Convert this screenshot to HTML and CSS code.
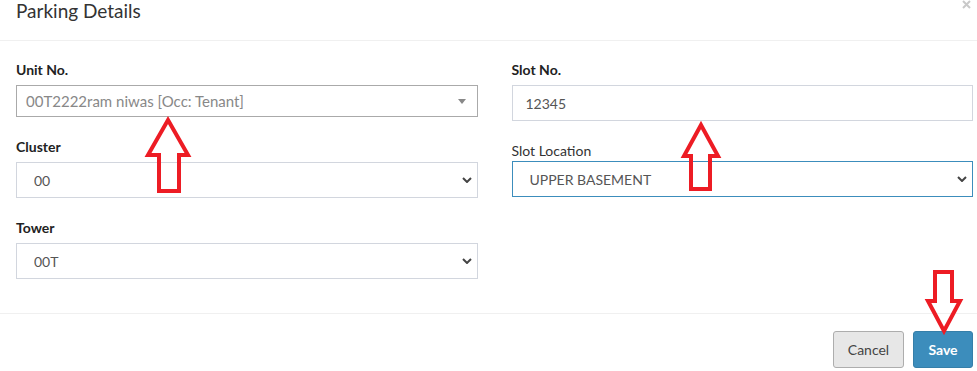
FILE: index.html
```html
<!DOCTYPE html>
<html lang="en">
<head>
  <meta charset="UTF-8" />
  <title>Parking Details</title>
  <link rel="stylesheet" href="styles.css">
</head>
<body>
  <div class="modal">
    <div class="modal-header">
      <h4 class="modal-title">Parking Details</h4>
      <span class="close" aria-label="Close">
        <svg width="9" height="9" viewBox="0 0 9 9"><path d="M1 1 L8 8 M8 1 L1 8" stroke="#c9c9c9" stroke-width="2"/></svg>
      </span>
    </div>

    <div class="modal-body">
      <div class="col">
        <div class="form-group">
          <label class="lbl">Unit No.</label>
          <div class="select2">
            <span class="select2-text">00T2222ram niwas [Occ: Tenant]</span>
            <span class="select2-arrow"></span>
          </div>
        </div>
        <div class="form-group">
          <label class="lbl">Cluster</label>
          <div class="select-wrap">
            <select class="form-control"><option>00</option></select>
            <svg class="chevron" width="10" height="6" viewBox="0 0 10 6"><path d="M1 1 L5 5 L9 1" fill="none" stroke="#444" stroke-width="2"/></svg>
          </div>
        </div>
        <div class="form-group">
          <label class="lbl">Tower</label>
          <div class="select-wrap">
            <select class="form-control"><option>00T</option></select>
            <svg class="chevron" width="10" height="6" viewBox="0 0 10 6"><path d="M1 1 L5 5 L9 1" fill="none" stroke="#444" stroke-width="2"/></svg>
          </div>
        </div>
      </div>

      <div class="col">
        <div class="form-group">
          <label class="lbl">Slot No.</label>
          <input class="form-control input" type="text" value="12345">
        </div>
        <div class="form-group">
          <label class="lbl-plain">Slot Location</label>
          <div class="select-wrap">
            <select class="form-control focused"><option>UPPER BASEMENT</option></select>
            <svg class="chevron" width="10" height="6" viewBox="0 0 10 6"><path d="M1 1 L5 5 L9 1" fill="none" stroke="#444" stroke-width="2"/></svg>
          </div>
        </div>
      </div>
    </div>

    <div class="modal-footer">
      <button class="btn btn-default" type="button">Cancel</button>
      <button class="btn btn-primary" type="button">Save</button>
    </div>

    <!-- red annotation arrows -->
    <svg class="arrows" width="977" height="371" viewBox="0 0 977 371">
      <polygon points="168,120 188,155 179,155 179,191 159,191 159,155 148,155" />
      <polygon points="701,125 718,156 710,156 710,189 691,189 691,156 684,156" />
      <polygon points="935,272 952,272 952,301 960,301 944,331 928,301 935,301" />
    </svg>
  </div>
</body>
</html>
```

FILE: styles.css
```css
* {
  box-sizing: border-box;
}

body {
  margin: 0;
  background: #fff;
  font-family: 'Lato', 'Liberation Sans', sans-serif;
  color: #333;
}

.modal {
  position: relative;
  width: 977px;
  height: 371px;
  overflow: hidden;
}

/* Header */
.modal-header {
  display: flex;
  justify-content: space-between;
  align-items: flex-start;
  height: 41px;
  padding: 0 6px 0 16px;
  border-bottom: 1px solid #f0f0f0;
}

.modal-title {
  margin: 0;
  font-size: 19px;
  font-weight: 400;
  line-height: 21px;
  color: #333;
}

.close {
  display: block;
  height: 9px;
  margin-top: 0;
}

.close svg {
  display: block;
}

/* Body */
.modal-body {
  display: grid;
  grid-template-columns: 1fr 1fr;
  column-gap: 34px;
  padding: 19px 4px 14px 16px;
}

.form-group {
  margin-bottom: 20px;
}

.lbl {
  display: block;
  height: 20px;
  margin-bottom: 5px;
  font-size: 14px;
  font-weight: 700;
  line-height: 20px;
  color: #222;
}

.lbl-plain {
  display: block;
  height: 20px;
  margin: 0;
  font-size: 14px;
  font-weight: 400;
  line-height: 20px;
  color: #333;
}

.form-control {
  display: block;
  width: 100%;
  height: 36px;
  margin: 0;
  border: 1px solid #d2d6de;
  border-radius: 0;
  background: #fff;
  font-family: 'Lato', 'Liberation Sans', sans-serif;
  font-size: 14px;
  color: #555;
  outline: none;
}

.input {
  padding: 0 12px 0 13px;
}

select.form-control {
  appearance: none;
  -webkit-appearance: none;
  padding: 0 12px 0 17px;
}

select.focused {
  border-color: #3c8dbc;
}

.select-wrap {
  position: relative;
}

.chevron {
  position: absolute;
  right: 6px;
  top: 15px;
  pointer-events: none;
}

/* select2 style box */
.select2 {
  position: relative;
  display: flex;
  align-items: center;
  height: 32px;
  padding: 0 10px 0 9px;
  border: 1px solid #aaa;
  background: #fff;
}

.select2-text {
  font-size: 15px;
  color: #888;
}

.select2-arrow {
  position: absolute;
  right: 11px;
  top: 13px;
  width: 0;
  height: 0;
  border-left: 4px solid transparent;
  border-right: 4px solid transparent;
  border-top: 5px solid #888;
}

/* Footer */
.modal-footer {
  display: flex;
  justify-content: flex-end;
  gap: 9px;
  padding: 17px 4px 0 16px;
  border-top: 1px solid #f0f0f0;
}

.btn {
  height: 37px;
  padding: 0 13px;
  border-radius: 3px;
  font-family: 'Lato', 'Liberation Sans', sans-serif;
  font-size: 14px;
  cursor: pointer;
}

.btn-default {
  width: 71px;
  background: #e7e7e7;
  border: 1px solid #adadad;
  color: #444;
}

.btn-primary {
  width: 60px;
  background: #3c8dbc;
  border: 1px solid #367fa9;
  color: #fff;
  font-weight: 700;
}

/* Annotation overlay */
.arrows {
  position: absolute;
  left: 0;
  top: 0;
  pointer-events: none;
}

.arrows polygon {
  fill: none;
  stroke: #ed1c24;
  stroke-width: 4;
  stroke-linejoin: miter;
}
```
